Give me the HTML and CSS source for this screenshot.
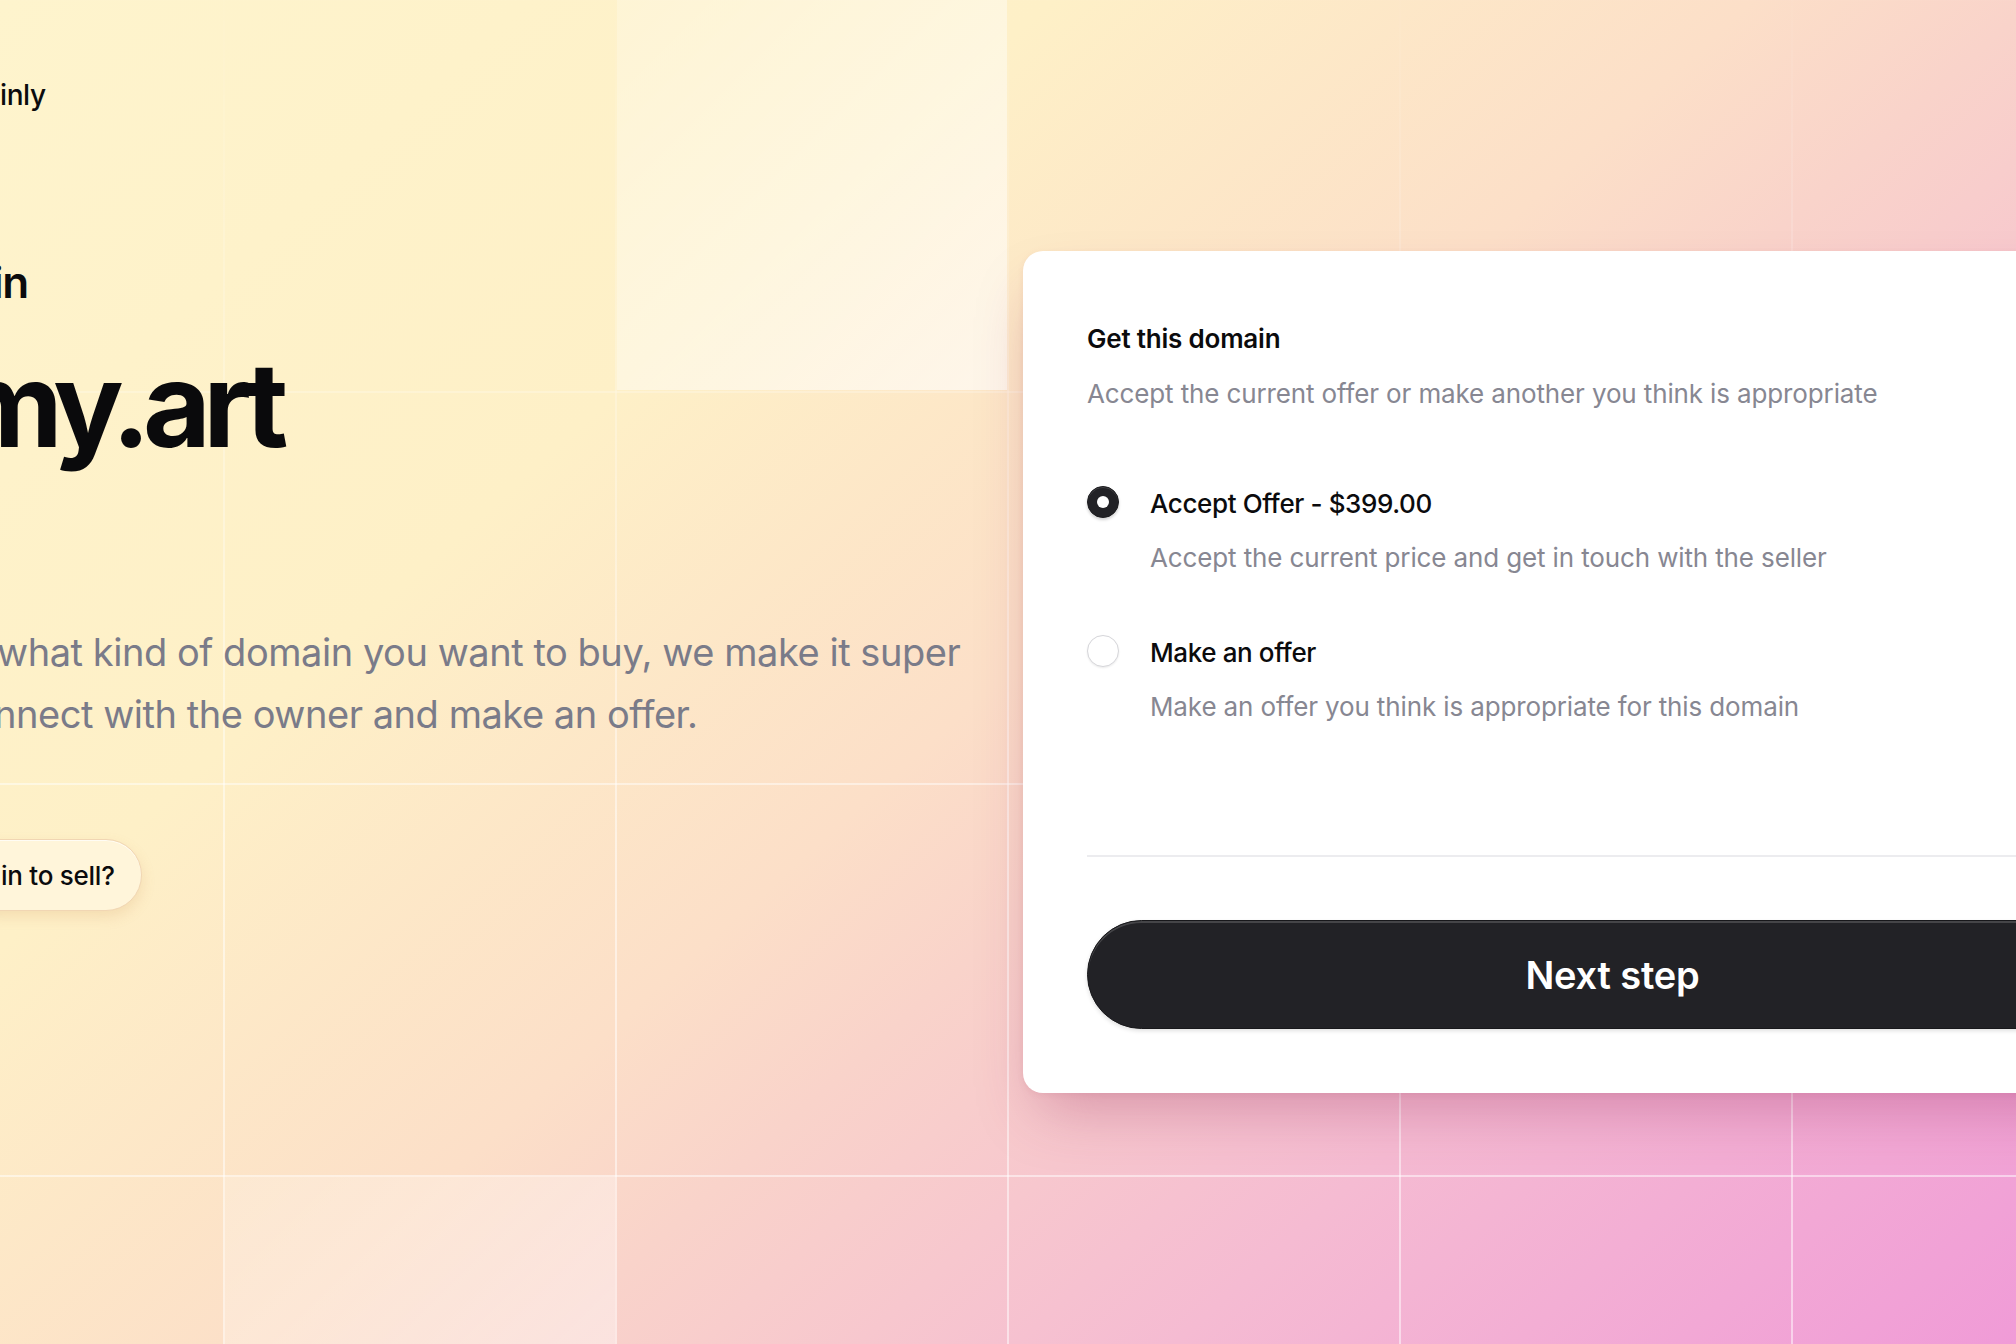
FILE: index.html
```html
<!DOCTYPE html>
<html lang="en">
<head>
<meta charset="utf-8">
<title>my.art — Get this domain</title>
<link rel="stylesheet" href="styles.css">
</head>
<body>
<div class="page">
  <section class="hero">
    <div class="brand">inly</div>
    <div class="eyebrow">in</div>
    <h1 class="domain">my.art</h1>
    <p class="lead">
      <span class="lead-line lead-line--first">what kind of domain you want to buy, we make it super</span>
      <span class="lead-line lead-line--cut">nnect with the owner and make an offer.</span>
    </p>
    <a class="sell-btn" href="#">in to sell?</a>
  </section>

  <section class="card">
    <h2 class="card-title">Get this domain</h2>
    <p class="card-sub">Accept the current offer or make another you think is appropriate</p>

    <div class="options">
      <div class="option">
        <span class="radio radio--on"></span>
        <div class="option-text">
          <div class="option-label">Accept Offer - $399.00</div>
          <div class="option-desc">Accept the current price and get in touch with the seller</div>
        </div>
      </div>
      <div class="option">
        <span class="radio"></span>
        <div class="option-text">
          <div class="option-label">Make an offer</div>
          <div class="option-desc">Make an offer you think is appropriate for this domain</div>
        </div>
      </div>
    </div>

    <div class="divider"></div>

    <button class="next" type="button">Next step</button>
  </section>
</div>
</body>
</html>
```

FILE: styles.css
```css
* { box-sizing: border-box; }

html, body {
  margin: 0;
  padding: 0;
}

body {
  position: relative;
  width: 2016px;
  height: 1344px;
  overflow: hidden;
  font-family: "Inter", "Noto Sans", sans-serif;
  color: #0b0b0d;
  background-color: #fbdcc9;
  background-image:
    linear-gradient(135deg, rgba(255,255,255,0.22) 0%, rgba(255,255,255,0.62) 100%),
    linear-gradient(135deg, rgba(255,255,255,0.18) 0%, rgba(255,255,255,0.40) 100%),
    linear-gradient(138deg, #fef4cd 0%, #fef0c7 30%, #fcdfc8 50%, #f9d3ca 58%, #f5bbd2 76%, #f09bd7 100%);
  background-size:
    390px 390px,
    390px 170px,
    100% 100%;
  background-position:
    617px 0,
    225px 1177px,
    0 0;
  background-repeat: no-repeat;
}

/* faint grid drawn over the gradient, fading out toward the top */
body::before {
  content: "";
  position: absolute;
  inset: 0;
  pointer-events: none;
  background-image:
    linear-gradient(to right, rgba(255,255,255,0.5) 0, rgba(255,255,255,0.5) 2px, transparent 2px),
    linear-gradient(to bottom, rgba(255,255,255,0.5) 0, rgba(255,255,255,0.5) 2px, transparent 2px);
  background-size: 392px 100%, 100% 392px;
  background-position: 615px 0, 0 391px;
  background-repeat: repeat-x, repeat-y;
  -webkit-mask-image: linear-gradient(to bottom, rgba(0,0,0,0.05) 0%, rgba(0,0,0,0.5) 32%, #000 62%);
  mask-image: linear-gradient(to bottom, rgba(0,0,0,0.05) 0%, rgba(0,0,0,0.5) 32%, #000 62%);
}

.page {
  position: relative;
  z-index: 1;
  display: flex;
  align-items: flex-start;
  width: 2016px;
  height: 1344px;
}

/* ---------- hero (left) ---------- */
.hero {
  flex: none;
  width: 1023px;
  display: flex;
  flex-direction: column;
  align-items: flex-start;
  padding-top: 78px;
}

.brand {
  font-size: 28px;
  line-height: 34px;
  font-weight: 500;
  letter-spacing: -0.015em;
  color: #0b0b0d;
}

.eyebrow {
  margin: 144px 0 0 -8px;
  font-size: 44px;
  line-height: 52px;
  font-weight: 600;
  letter-spacing: -0.03em;
  color: #0b0b0d;
}

.domain {
  margin: 37px 0 0 -44px;
  font-size: 117px;
  line-height: 120px;
  font-weight: 700;
  letter-spacing: -0.065em;
  color: #0a0a0c;
}

.lead {
  margin: 156px 0 0 0;
  font-size: 38px;
  line-height: 62px;
  font-weight: 400;
  letter-spacing: -0.012em;
  color: #7a7b89;
}

.lead-line {
  display: block;
  white-space: nowrap;
}

.lead-line--first {
  margin-left: -3px;
}

.lead-line--cut {
  margin-left: -6px;
}

.sell-btn {
  margin: 94px 0 0 -40px;
  height: 72px;
  display: inline-flex;
  align-items: center;
  padding: 0 26px 0 40px;
  border-radius: 999px;
  background: #fff5da;
  border: 1.5px solid #f1d6b3;
  box-shadow: 0 6px 14px rgba(200, 140, 80, 0.18), inset 0 1px 0 rgba(255,255,255,0.7);
  font-size: 26px;
  font-weight: 500;
  letter-spacing: -0.01em;
  color: #0b0b0d;
  text-decoration: none;
}

/* ---------- card (right) ---------- */
.card {
  flex: none;
  width: 1179px;
  margin-top: 251px;
  padding: 72px 64px 64px 64px;
  background: #ffffff;
  border-radius: 20px;
  box-shadow: 0 30px 60px -16px rgba(150, 40, 90, 0.34), 0 2px 6px rgba(150, 60, 80, 0.08);
  display: flex;
  flex-direction: column;
}

.card-title {
  margin: 0;
  font-size: 26px;
  line-height: 32px;
  font-weight: 600;
  letter-spacing: -0.008em;
  color: #0b0b0d;
}

.card-sub {
  margin: 23px 0 0 0;
  font-size: 26px;
  line-height: 32px;
  font-weight: 400;
  letter-spacing: -0.005em;
  color: #878792;
}

.options {
  margin-top: 78px;
  display: flex;
  flex-direction: column;
  gap: 63px;
}

.option {
  display: flex;
  align-items: flex-start;
  gap: 31px;
}

.radio {
  flex: none;
  width: 32px;
  height: 32px;
  margin-top: -2px;
  border-radius: 50%;
  background: #ffffff;
  border: 1.5px solid #d6d6da;
  box-shadow: 0 1px 2px rgba(0, 0, 0, 0.08);
  display: flex;
  align-items: center;
  justify-content: center;
}

.radio--on {
  background: #222226;
  border-color: #1c1c1f;
  box-shadow: 0 2px 3px rgba(0, 0, 0, 0.18), inset 0 1px 0 rgba(255,255,255,0.15);
}

.radio--on::after {
  content: "";
  width: 12px;
  height: 12px;
  border-radius: 50%;
  background: #ffffff;
}

.option-text {
  display: flex;
  flex-direction: column;
  gap: 22px;
}

.option-label {
  font-size: 26px;
  line-height: 32px;
  font-weight: 500;
  letter-spacing: -0.015em;
  color: #0b0b0d;
}

.option-desc {
  font-size: 26px;
  line-height: 32px;
  font-weight: 400;
  letter-spacing: -0.005em;
  color: #878792;
}

.divider {
  margin-top: 132px;
  height: 2px;
  background: #ececef;
}

.next {
  margin-top: 63px;
  height: 109px;
  width: 100%;
  border: 1px solid #18181b;
  border-radius: 999px;
  background: #222226;
  box-shadow: inset 0 2px 0 rgba(255, 255, 255, 0.16), 0 2px 4px rgba(0, 0, 0, 0.12);
  font-family: "Inter", "Noto Sans", sans-serif;
  font-size: 38px;
  font-weight: 600;
  letter-spacing: -0.005em;
  color: #ffffff;
  cursor: pointer;
}
```
